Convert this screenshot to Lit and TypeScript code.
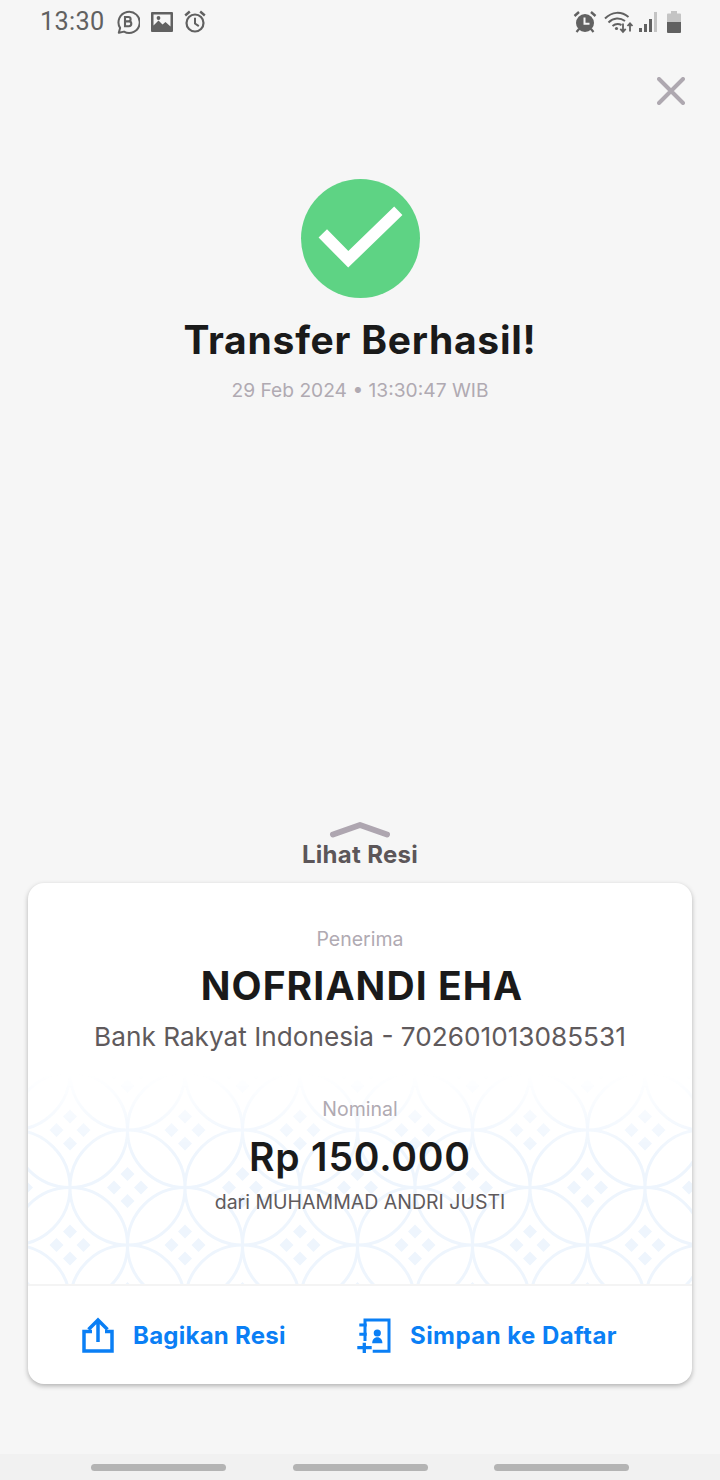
import { LitElement, html, css, svg } from "lit";
import { customElement } from "lit/decorators.js";

// one kawung motif: four small diamonds around a centre point
const motif = (x: number, y: number) => svg`
  <path d="M${x} ${y - 20.500}l7 7-7 7-7-7zM${x} ${y + 6.500}l7 7-7 7-7-7zM${x - 13.500} ${y - 7}l7 7-7 7-7-7zM${x + 13.500} ${y - 7}l7 7-7 7-7-7z" />
`;

@customElement("app-root")
export class AppRoot extends LitElement {
  static styles = css`
    :host {
      display: flex;
      flex-direction: column;
      width: 720px;
      height: 1480px;
      background: #f6f6f6;
      font-family: Inter, "Liberation Sans", sans-serif;
      overflow: hidden;
    }
    svg { display: block; flex: none; }

    .status {
      height: 43px;
      display: flex;
      align-items: center;
      padding: 0 39px 2px 40px;
      color: #616161;
    }
    .time {
      font: 400 25.3px Roboto, sans-serif;
      letter-spacing: 0.3px;
    }
    .status-left { display: flex; align-items: center; gap: 11px; }
    .status-right { margin-left: auto; display: flex; align-items: center; }

    .close-row {
      display: flex;
      justify-content: flex-end;
      padding: 32px 35px 0 0;
    }

    .hero {
      display: flex;
      flex-direction: column;
      align-items: center;
      margin-top: 74px;
    }
    .check { width: 119px; height: 119px; }
    .title {
      margin: 18px 0 0;
      font-size: 39px;
      line-height: 48px;
      font-weight: 700;
      letter-spacing: 0.75px;
      color: #1a1a1a;
    }
    .stamp {
      margin-top: 13px;
      font-size: 19.2px;
      line-height: 26px;
      color: #b0aab2;
    }

    .peek {
      margin-top: auto;
      display: flex;
      flex-direction: column;
      align-items: center;
    }
    .peek-label {
      margin-top: 1px;
      font-size: 24px;
      line-height: 30px;
      font-weight: 700;
      letter-spacing: 0.3px;
      color: #5c5659;
    }

    .card {
      margin: 13px 28px 0;
      height: 501px;
      background: #fff;
      border-radius: 16px;
      box-shadow: 0 2px 5px rgba(0, 0, 0, 0.28);
      display: flex;
      flex-direction: column;
      overflow: hidden;
    }
    .details {
      position: relative;
      flex: 1;
      display: flex;
      flex-direction: column;
      align-items: center;
      padding-top: 43px;
      text-align: center;
    }
    .batik {
      position: absolute;
      left: 0;
      right: 0;
      bottom: 0;
      height: 225px;
      -webkit-mask-image: linear-gradient(to bottom, transparent 15px, #000 95px);
      mask-image: linear-gradient(to bottom, transparent 15px, #000 95px);
    }
    .details > div { position: relative; }
    .label { font-size: 19.5px; line-height: 26px; color: #b0aab2; }
    .name {
      margin-top: 10px;
      padding-left: 4px;
      font-size: 39px;
      line-height: 48px;
      font-weight: 700;
      letter-spacing: 1.1px;
      color: #1a1a1a;
    }
    .bank {
      margin-top: 9px;
      font-size: 26.2px;
      line-height: 36px;
      color: #5f5a5c;
    }
    .label.second { margin-top: 41px; }
    .amount {
      margin-top: 11px;
      font-size: 39px;
      line-height: 48px;
      font-weight: 600;
      letter-spacing: 0.8px;
      color: #1a1a1a;
    }
    .from {
      margin-top: 8px;
      font-size: 19.5px;
      line-height: 26px;
      color: #5f5a5c;
    }

    .actions {
      height: 100px;
      border-top: 2px solid #f4f4f4;
      box-sizing: border-box;
      display: flex;
      align-items: center;
      padding-left: 53px;
      color: #0a7ff5;
      font-size: 24px;
      font-weight: 700;
    }
    .action { display: flex; align-items: center; }
    .action.share { width: 276px; gap: 18px; letter-spacing: 0.25px; }
    .action.save { gap: 19px; letter-spacing: 0.45px; }

    .nav {
      margin-top: 70px;
      height: 26px;
      background: #f1f1f1;
      display: flex;
      justify-content: space-between;
      align-items: center;
      padding: 0 91px;
    }
    .nav span {
      width: 135px;
      height: 7px;
      border-radius: 4px;
      background: #b4b4b4;
    }
  `;

  render() {
    return html`
      <div class="status">
        <div class="status-left">
          <span class="time">13:30</span>
          <svg width="24" height="24" viewBox="0 0 24 24" fill="none" stroke="#616161" stroke-width="2">
            <path d="M2.800 22.800l1.300-4.900A10.600 10.600 0 1 1 8 21.600z" stroke-linejoin="round" />
            <path d="M9 7h3.400a2.200 2.200 0 0 1 0 4.400H9zM9 11.400h3.900a2.400 2.400 0 0 1 0 4.800H9z" stroke-width="2.100" />
          </svg>
          <svg width="22" height="20" viewBox="0 0 22 20">
            <path fill="#616161" fill-rule="evenodd" d="M1 0h20a1 1 0 0 1 1 1v18a1 1 0 0 1-1 1H1a1 1 0 0 1-1-1V1a1 1 0 0 1 1-1zM2.500 2.500v11l5-5 4 4 3-2.500 5 4.500v-12z" />
            <circle cx="7.500" cy="6" r="1.900" fill="#616161" />
          </svg>
          <svg width="22" height="23" viewBox="0 0 22 23" fill="none" stroke="#616161">
            <circle cx="11" cy="13" r="8.500" stroke-width="2.200" />
            <path d="M11 7.800V13.500l3.800 2.600" stroke-width="2" />
            <path d="M1.200 5.500 5.800 1.500M20.800 5.500 16.200 1.500" stroke-width="2.400" />
          </svg>
        </div>
        <div class="status-right">
          <svg width="24" height="24" viewBox="0 0 24 24" fill="#616161" stroke="#616161">
            <circle cx="12" cy="13" r="9" stroke="none" />
            <path d="M1.500 6 6 2M22.500 6 18 2" stroke-width="2.400" fill="none" />
            <path d="M3.500 22l2.500-3M20.500 22 18 19" stroke-width="2.200" fill="none" />
            <path d="M11.500 7.500v6.300h5" stroke="#f6f6f6" stroke-width="2" fill="none" />
          </svg>
          <svg width="30" height="24" viewBox="0 0 30 24" fill="none" stroke="#616161" style="margin:0 4px 0 7px">
            <path d="M1 8.500C8 1.500 17 1 24.500 7" stroke-width="2" />
            <path d="M4.500 12.500C9.500 7.500 16 7.500 21 11" stroke-width="2" />
            <path d="M8.500 16c3-2.500 6-2.500 9-1" stroke-width="2" />
            <circle cx="12.500" cy="18.500" r="1.600" fill="#616161" stroke="none" />
            <path d="M19 13.500v8M16.300 18.800l2.700 3 2.700-3" stroke-width="1.800" />
            <path d="M26 21.500v-8M23.500 16l2.500-2.700 2.500 2.700" stroke-width="1.800" />
          </svg>
          <svg width="20" height="22" viewBox="0 0 20 22" style="margin-right:9px">
            <rect x="1" y="17" width="3" height="4" fill="#616161" />
            <rect x="6" y="13" width="3" height="8" fill="#616161" />
            <rect x="11" y="8" width="3" height="13" fill="#616161" />
            <rect x="16" y="1" width="3" height="20" fill="#c4c4c4" />
          </svg>
          <svg width="14" height="22" viewBox="0 0 14 22">
            <path fill="#c4c4c4" d="M4 0h6v2.500h3a1 1 0 0 1 1 1V11H0V3.500a1 1 0 0 1 1-1h3z" />
            <path fill="#616161" d="M0 11h14v10a1 1 0 0 1-1 1H1a1 1 0 0 1-1-1z" />
          </svg>
        </div>
      </div>

      <div class="close-row">
        <svg width="28" height="28" viewBox="0 0 28 28" stroke="#aea8b0" stroke-width="4" stroke-linecap="round">
          <path d="M2 2l24 24M26 2 2 26" />
        </svg>
      </div>

      <div class="hero">
        <svg class="check" viewBox="0 0 119 119">
          <circle cx="59.500" cy="59.500" r="59.500" fill="#5ed384" />
          <path d="M21.800 54.300 47.300 80.300 97.300 31.700" fill="none" stroke="#fff" stroke-width="11.800" />
        </svg>
        <h1 class="title">Transfer Berhasil!</h1>
        <div class="stamp">29 Feb 2024 • 13:30:47 WIB</div>
      </div>

      <div class="peek">
        <svg width="62" height="18" viewBox="0 0 62 18" fill="none" stroke="#aea6b0" stroke-width="6" stroke-linecap="round" stroke-linejoin="round">
          <path d="M4 13.500 31 4l27 9.500" />
        </svg>
        <div class="peek-label">Lihat Resi</div>
      </div>

      <div class="card">
        <div class="details">
          <svg class="batik" width="664" height="225" viewBox="0 0 664 225">
            <defs>
              <pattern id="kawung" width="115" height="115" patternUnits="userSpaceOnUse" patternTransform="translate(42 71)">
                <g fill="none" stroke="#eef5fd" stroke-width="3">
                  <circle cx="0" cy="0" r="57.500" />
                  <circle cx="115" cy="0" r="57.500" />
                  <circle cx="0" cy="115" r="57.500" />
                  <circle cx="115" cy="115" r="57.500" />
                  <circle cx="57.500" cy="57.500" r="57.500" />
                </g>
                <g fill="#eef5fd">
                  ${motif(57.5, 57.5)}${motif(0, 0)}${motif(115, 0)}${motif(0, 115)}${motif(115, 115)}
                </g>
              </pattern>
            </defs>
            <rect width="664" height="225" fill="url(#kawung)" />
          </svg>
          <div class="label">Penerima</div>
          <div class="name">NOFRIANDI EHA</div>
          <div class="bank">Bank Rakyat Indonesia - 702601013085531</div>
          <div class="label second">Nominal</div>
          <div class="amount">Rp 150.000</div>
          <div class="from">dari MUHAMMAD ANDRI JUSTI</div>
        </div>
        <div class="actions">
          <div class="action share">
            <svg width="34" height="36" viewBox="0 0 34 36" fill="none" stroke="#0a7ff5" stroke-width="3.500">
              <path d="M11 14.500H3V34h28V14.500h-7" />
              <path d="M17 25V3.500M7.500 12.500 17 3l9.500 9.500" />
            </svg>
            <span>Bagikan Resi</span>
          </div>
          <div class="action save">
            <svg width="34" height="36" viewBox="0 0 34 36" fill="none" stroke="#0a7ff5" stroke-width="3">
              <path d="M8 24V3h24v31.300H15.700" />
              <path d="M2.300 8h7.400M2.300 17.300h7.400" />
              <path d="M7.300 25.700V36M0.300 30.700h14.400" stroke-width="3.300" />
              <circle cx="20.300" cy="16" r="3.600" fill="#0a7ff5" stroke="none" />
              <path d="M15.200 26.300c0-3.500 2-6 5.100-6s5.100 2.500 5.100 6z" fill="#0a7ff5" stroke="none" />
            </svg>
            <span>Simpan ke Daftar</span>
          </div>
        </div>
      </div>

      <div class="nav"><span></span><span></span><span></span></div>
    `;
  }
}
